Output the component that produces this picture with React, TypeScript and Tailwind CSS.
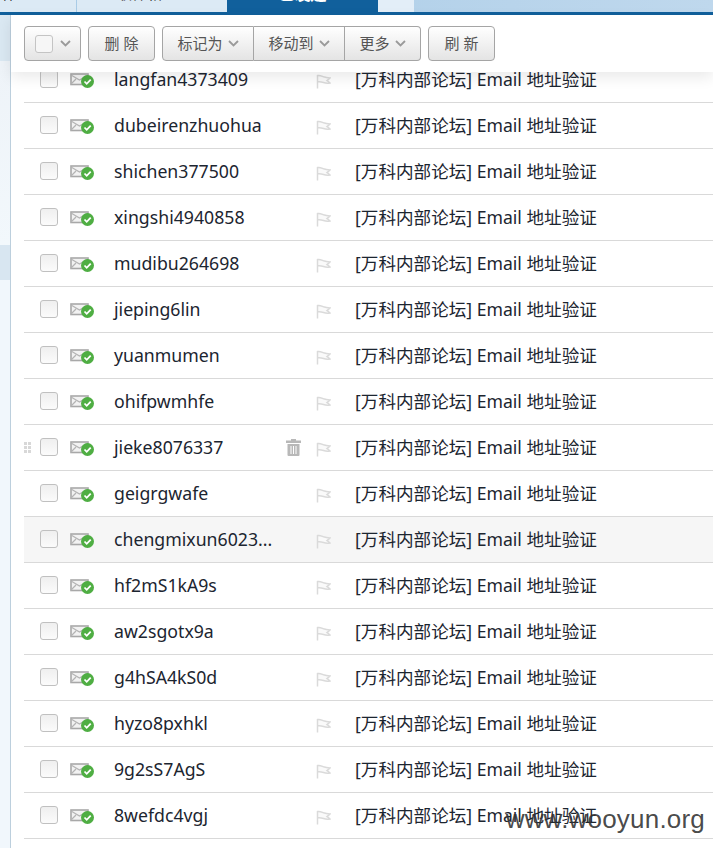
const names = ["langfan4373409","dubeirenzhuohua","shichen377500","xingshi4940858","mudibu264698","jieping6lin","yuanmumen","ohifpwmhfe","jieke8076337","geigrgwafe","chengmixun6023...","hf2mS1kA9s","aw2sgotx9a","g4hSA4kS0d","hyzo8pxhkl","9g2sS7AgS","8wefdc4vgj"];

function Chevron() {
  return (
    <svg width="11" height="7" viewBox="0 0 11 7" fill="none" className="shrink-0">
      <path d="M1 1l4.500 4.500L10 1" stroke="#9a9a9a" strokeWidth="1.800" />
    </svg>
  );
}

function MailIcon() {
  return (
    <svg width="25" height="15" viewBox="0 0 25 15" className="shrink-0">
      <rect x="1" y="1" width="17" height="10.500" fill="#f2f2f2" stroke="#a8a8a8" strokeWidth="1.600" />
      <path d="M1 2l8.500 5 8.500-5M1 11l5-5" fill="none" stroke="#b4b4b4" strokeWidth="1.200" />
      <circle cx="17.500" cy="8.500" r="6.500" fill="#4fae43" />
      <path d="M14.500 8.500l2.200 2.300 4-4.200" fill="none" stroke="#fff" strokeWidth="1.800" />
    </svg>
  );
}

function Flag() {
  return (
    <svg width="15" height="15" viewBox="0 0 15 15" className="shrink-0">
      <path d="M1.500 14.500V1.500C4 1 5.500 2 7.500 2.800c2 .7 3.500 1 6.500 1.200-1 1-2 1.800-3 2.600 1 .6 2 1.300 3 2.400-3 .6-4.500.2-6.500-.5-2-.7-3.500-1.100-6-.7" fill="#fafafa" stroke="#dadada" strokeWidth="1.500" />
    </svg>
  );
}

function Trash() {
  return (
    <svg width="15" height="17" viewBox="0 0 15 17" className="shrink-0">
      <path d="M5 0h5v1.500h5V4H0V1.500h5z" fill="#b8b8b8" />
      <path d="M1.500 5h12v11a1 1 0 0 1-1 1h-10a1 1 0 0 1-1-1z" fill="#b8b8b8" />
      <path d="M5 7v8M7.500 7v8M10 7v8" stroke="#fff" strokeWidth="1" />
    </svg>
  );
}

function Grip() {
  return (
    <div className="grid w-[7px] grid-cols-2 gap-[1px]">
      {[0, 1, 2, 3, 4, 5].map((i) => (
        <span key={i} className="h-[3px] w-[3px] bg-[#d8d8d8]" />
      ))}
    </div>
  );
}

function Checkbox() {
  return (
    <span className="block h-[18px] w-[18px] shrink-0 rounded-[3px] border border-[#c0c0c0] bg-gradient-to-b from-[#efefef] to-[#fbfbfb]" />
  );
}

const btn = "flex h-[35px] items-center justify-center bg-gradient-to-b from-white to-[#e4e4e4] text-[15px] text-[#555]";

function Row({ name, index }: { name: string; index: number }) {
  const active = index === 8;
  const hover = index === 10;
  return (
    <div className={`flex h-[46px] items-center border-b border-[#d9d9d9] ${hover ? "bg-[#f6f6f6]" : "bg-white"}`}>
      <div className="flex w-[16px] shrink-0 items-center">{active && <Grip />}</div>
      <div className="mt-[-2px]"><Checkbox /></div>
      <div className="ml-[12px] mt-[2px]"><MailIcon /></div>
      <div className="ml-[19px] w-[172px] shrink-0 text-[17.7px] leading-none text-[#1c2530]">{name}</div>
      <div className="flex w-[30px] shrink-0 items-center">{active && <Trash />}</div>
      <div className="mt-[3px]"><Flag /></div>
      <div className="ml-[24px] whitespace-nowrap text-[17.6px] leading-none text-[#1c2530]">[万科内部论坛] Email 地址验证</div>
    </div>
  );
}

export default function App() {
  return (
    <div
      className="relative h-[848px] w-[713px] overflow-hidden bg-white"
      style={{ fontFamily: '"Noto Sans", "Noto Sans CJK SC", sans-serif' }}
    >
      <div className="flex h-[12px] overflow-hidden bg-gradient-to-r from-[#a6cae6] to-[#bfd8ed]">
        <div className="flex w-[76px] items-start overflow-hidden bg-[#dceaf5] pl-[2px] text-[14px] leading-[0px] text-[#333]"><span className="-mt-[6px]">件</span></div>
        <div className="ml-[1px] flex w-[150px] items-start overflow-hidden bg-[#dceaf5] pl-[40px] text-[15px] leading-[0px] text-[#333]"><span className="-mt-[7px]">收件箱</span></div>
        <div className="flex w-[151px] items-start justify-center overflow-hidden bg-[#11609c] text-[16px] font-bold leading-[0px] text-white"><span className="-mt-[6px]">已发送</span></div>
        <div className="w-[36px] bg-[#e3eef8]" />
      </div>
      <div className="h-[3px] bg-[#11609c]" />
      <div className="flex h-[833px]">
        <div className="flex w-[11px] shrink-0 flex-col border-r border-[#bccfdd] bg-[#f1f7fc]">
          <div className="h-[46px] bg-[#dae8f2]" />
          <div className="h-[184px] bg-gradient-to-b from-[#eef3f8] to-[#f2f8fc]" />
          <div className="h-[35px] bg-[#d8e6f1]" />
        </div>
        <div className="min-w-0 flex-1 pl-[13px]">
          <div className="relative z-10 -ml-[13px] flex h-[57px] items-center gap-[7px] bg-white pl-[13px] shadow-[0_5px_14px_rgba(0,0,0,0.09)]">
            <div className={`${btn} w-[57px] gap-[7px] rounded-[4px] border border-[#a5a5a5]`}>
              <span className="block h-[18px] w-[18px] rounded-[3px] border border-[#c4c4c4] bg-[#f6f6f6]" />
              <Chevron />
            </div>
            <div className={`${btn} w-[67px] rounded-[4px] border border-[#a5a5a5]`}>删 除</div>
            <div className="flex">
              <div className={`${btn} w-[92px] gap-[5px] rounded-l-[4px] border border-[#a5a5a5]`}>标记为 <Chevron /></div>
              <div className={`${btn} w-[91px] gap-[5px] border-y border-r border-[#a5a5a5]`}>移动到 <Chevron /></div>
              <div className={`${btn} w-[76px] gap-[5px] rounded-r-[4px] border-y border-r border-[#a5a5a5]`}>更多 <Chevron /></div>
            </div>
            <div className={`${btn} w-[67px] rounded-[4px] border border-[#a5a5a5]`}>刷 新</div>
          </div>
          <div className="-mt-[15px]">
            {names.map((n, i) => (
              <Row key={n} name={n} index={i} />
            ))}
          </div>
        </div>
      </div>
      <div className="absolute right-[8px] top-[800px] text-[26px] leading-[38px] tracking-[0.2px] text-[#333]/90" style={{ fontFamily: '"Liberation Sans", sans-serif' }}>
        www.wooyun.org
      </div>
    </div>
  );
}
